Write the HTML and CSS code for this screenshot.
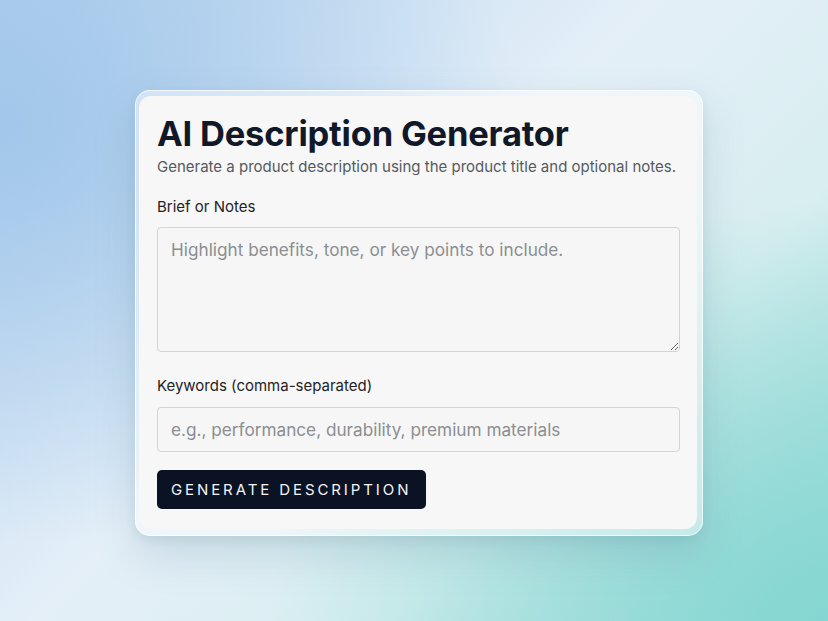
FILE: index.html
```html
<!DOCTYPE html>
<html lang="en">
<head>
<meta charset="utf-8">
<title>AI Description Generator</title>
<link rel="stylesheet" href="styles.css">
</head>
<body>
<main class="stage">
  <section class="frame">
    <div class="card">
      <h1 class="title">AI Description Generator</h1>
      <p class="subtitle">Generate a product description using the product title and optional notes.</p>
      <label class="label label-notes" for="notes">Brief or Notes</label>
      <textarea id="notes" class="notes" placeholder="Highlight benefits, tone, or key points to include."></textarea>
      <label class="label label-keywords" for="keywords">Keywords (comma-separated)</label>
      <input id="keywords" class="keywords" type="text" placeholder="e.g., performance, durability, premium materials">
      <div class="actions">
        <button class="generate" type="button">Generate Description</button>
      </div>
    </div>
  </section>
</main>
</body>
</html>
```

FILE: styles.css
```css
* { box-sizing: border-box; }
html, body { margin: 0; padding: 0; }
body {
  width: 828px;
  height: 621px;
  overflow: hidden;
  font-family: Inter, "Noto Sans", "Liberation Sans", sans-serif;
  background:
    radial-gradient(ellipse 520px 420px at 0% 20%, rgba(160,198,234,0.95), rgba(160,198,234,0) 100%),
    radial-gradient(ellipse 560px 420px at 100% 100%, rgba(132,214,210,0.95), rgba(132,214,210,0) 100%),
    linear-gradient(135deg, #b7d3ee 0%, #e4eff8 45%, #d8eef0 70%, #9adbd6 100%);
}
.stage {
  width: 828px;
  height: 621px;
  display: flex;
  justify-content: center;
  align-items: flex-start;
  padding-top: 90px;
  padding-left: 10px;
}
.frame {
  width: 568px;
  padding: 5px 5px 6px 3px;
  border-radius: 15px;
  background: rgba(255,255,255,0.45);
  border: 1px solid rgba(255,255,255,0.75);
  box-shadow: 0 18px 40px rgba(90,130,150,0.22), 0 4px 10px rgba(90,130,150,0.12);
}
.card {
  background: #f7f7f7;
  border-radius: 12px;
  padding: 17px 18px 20px 18px;
  display: flex;
  flex-direction: column;
}
.title {
  margin: 0;
  font-size: 34.5px;
  font-weight: 700;
  line-height: 42px;
  color: #111827;
  letter-spacing: -0.2px;
}
.subtitle {
  margin: 2px 0 0;
  font-size: 15px;
  line-height: 20px;
  color: #555a60;
  white-space: nowrap;
}
.label {
  font-size: 15px;
  line-height: 20px;
  color: #1f2226;
  font-weight: 400;
}
.label-notes { margin-top: 20px; }
.label-keywords { margin-top: 24px; }
.notes, .keywords {
  width: 523px;
  font-family: inherit;
  font-size: 17.2px;
  color: #222;
  background: #f6f6f6;
  border: 1px solid #d3d4d6;
  border-radius: 4px;
  padding: 10px 13px;
  outline: none;
}
.notes::placeholder, .keywords::placeholder { color: #8c8e91; }
.notes {
  margin-top: 10px;
  height: 125px;
  resize: vertical;
  line-height: 24px;
}
.keywords {
  margin-top: 11px;
  height: 45px;
  line-height: 24px;
}
.actions {
  margin-top: 18px;
  display: flex;
}
.generate {
  background: #0b1224;
  color: #f2f4f7;
  border: none;
  border-radius: 5px;
  height: 39px;
  padding: 0 15px 0 14px;
  font-family: inherit;
  font-size: 15px;
  font-weight: 400;
  letter-spacing: 2.9px;
  text-transform: uppercase;
}
```
